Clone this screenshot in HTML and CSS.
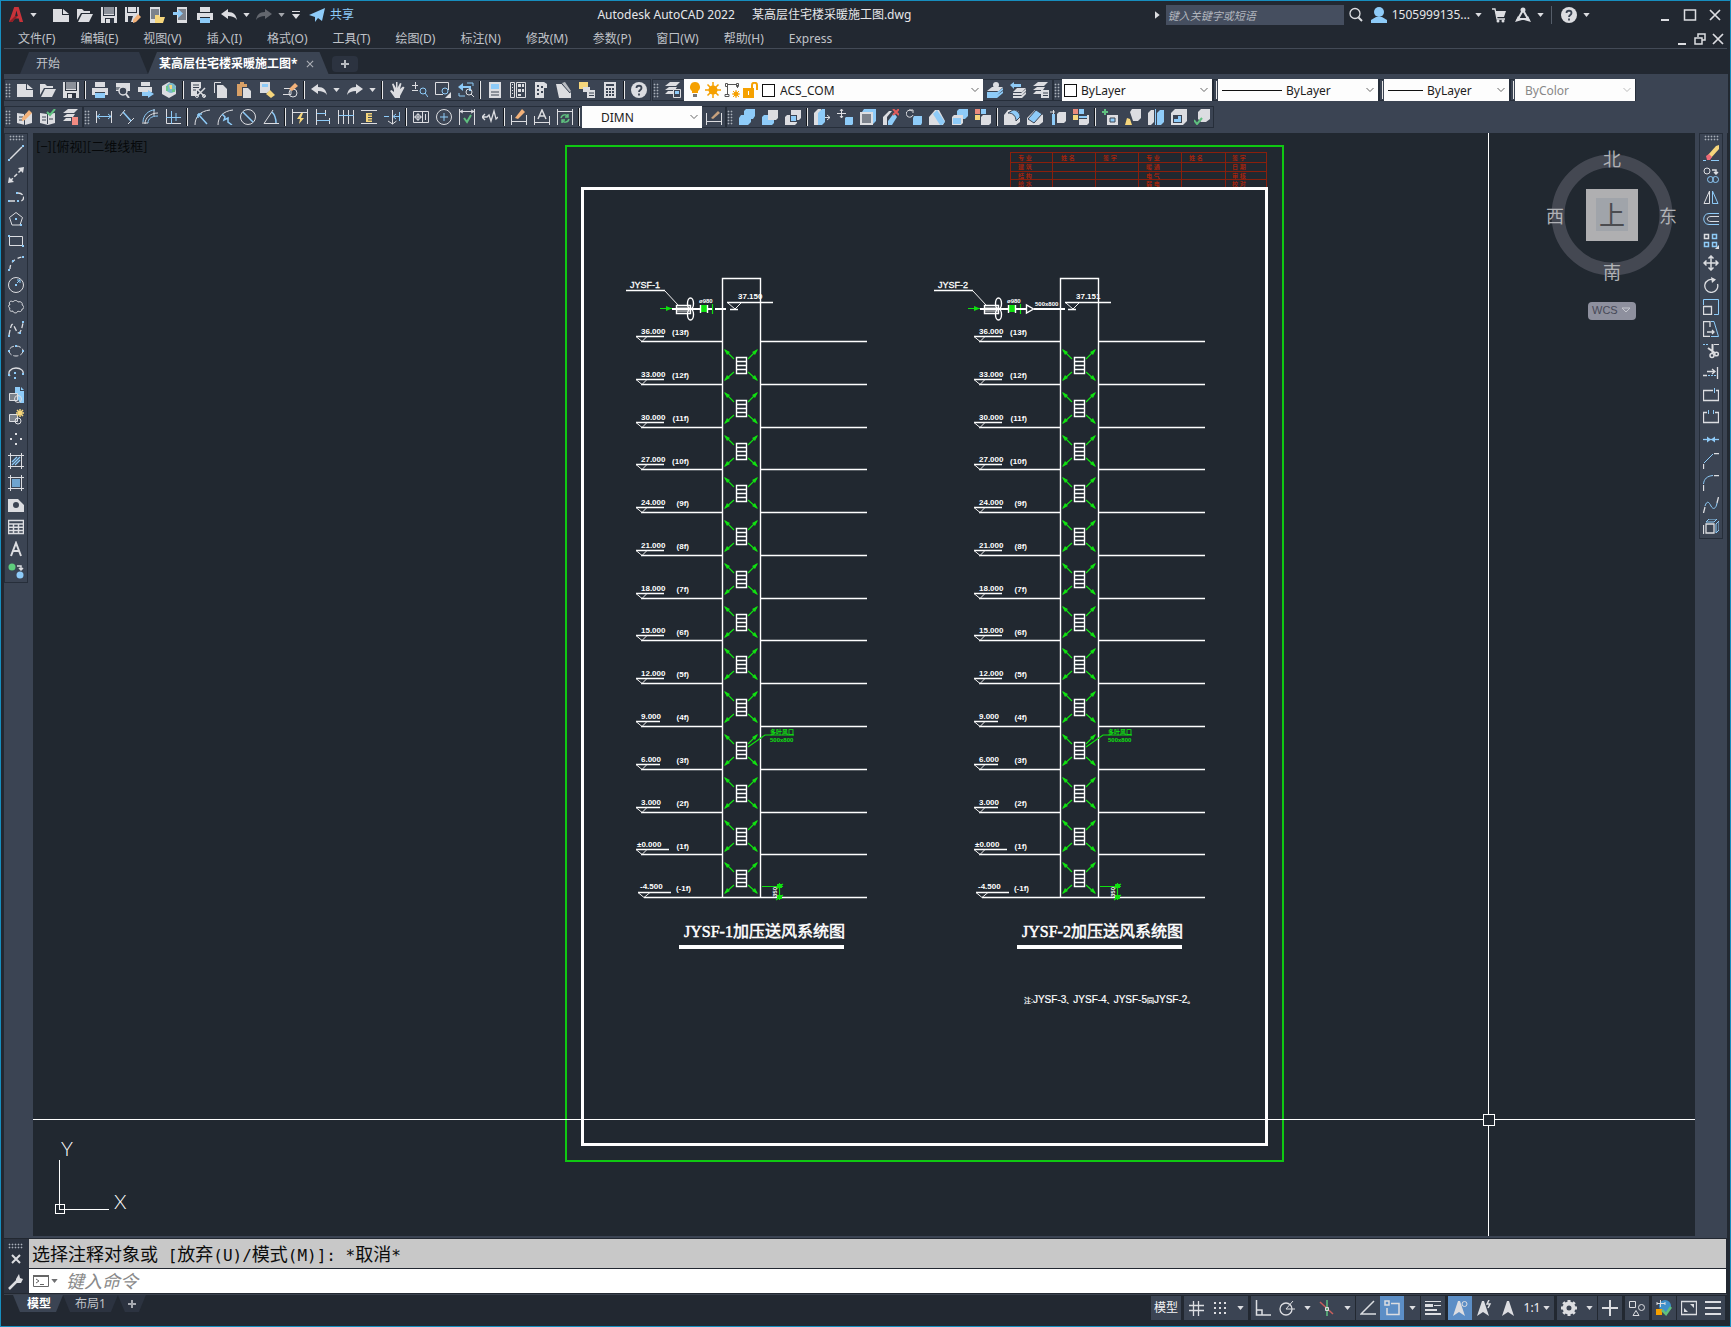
FILE: index.html
```html
<!DOCTYPE html>
<html lang="zh-CN">
<head>
<meta charset="utf-8">
<title>Autodesk AutoCAD 2022 某高层住宅楼采暖施工图.dwg</title>
<link rel="stylesheet" href="styles.css">
</head>
<body>
<svg class="sprite" aria-hidden="true">
<!-- shared parts -->
<symbol id="down" viewBox="0 0 8 5"><path class="w" d="M0 0h8L4 5z"/></symbol>
<symbol id="chev" viewBox="0 0 8 6"><path d="M.5 1L4 4.500 7.500 1" fill="none" stroke="currentColor"/></symbol>
<!-- files -->
<symbol id="logo" viewBox="0 0 16 18"><path fill="#c8333a" fill-rule="evenodd" d="M0 17L6 0h5l5 17h-4l-1-4H6l-2 4zM7 10h3L8.500 4z"/><path fill="#8e1f26" d="M0 17l7-7h3L4 17z"/></symbol>
<symbol id="new" viewBox="0 0 16 16"><path class="w" d="M0 2h9v6h7v7H0zM10 2l6 5h-6z"/></symbol>
<symbol id="open" viewBox="0 0 16 16"><path class="w" d="M0 13V2h5l2 2h6v2H4zM5 7h11l-4 8H1z"/></symbol>
<symbol id="save" viewBox="0 0 16 16"><path class="w" d="M0 0h16v16H0z"/><path fill="#8b9099" d="M3 0h10v7H3z"/><path fill="#2b323e" d="M2 0h1v8h10V0h1v9H2zM4 11h9v5H4z"/><path class="w" d="M5 12h4v4H5z"/></symbol>
<symbol id="saveas" viewBox="0 0 16 16"><path class="w" d="M0 0h14v8l-6 7H0z"/><path fill="#2b323e" d="M2 0h1v5h8V0h1v6H2zM3 9h5l-2 6H3z"/><path fill="#f3b27a" d="M8 13l5-6 3 3-5 5-3 1z"/></symbol>
<symbol id="mopen" viewBox="0 0 16 16"><path class="w" d="M1 0h10v16H1z"/><path fill="#7c828c" d="M2 2h8v10H2z"/><path class="y" d="M6 8h4l1 2h5l-2 6H6z"/></symbol>
<symbol id="msave" viewBox="0 0 16 16"><path class="w" d="M4 0h10v16H4z"/><path fill="#7c828c" d="M5 2h8v11H5z"/><path class="b" d="M0 5h5V2l5 4.500L5 11V8H0z"/></symbol>
<symbol id="print" viewBox="0 0 16 16"><path class="w" d="M3 0h10v5H3zM0 6h16v7h-3v-3H3v3H0z"/><path class="b" d="M3 11h10v5H3z"/></symbol>
<symbol id="undo" viewBox="0 0 16 16"><path class="w" d="M0 7l7-5v3c6 0 8 3 9 8-2-3-5-4-9-4v3z"/></symbol>
<symbol id="redo" viewBox="0 0 16 16"><path class="w" d="M16 7L9 2v3C3 5 1 8 0 13c2-3 5-4 9-4v3z"/></symbol>
<symbol id="custom" viewBox="0 0 10 10"><path class="w" d="M1 1h8v1H1zM1 4h8L5 9z"/></symbol>
<symbol id="plane" viewBox="0 0 16 16"><path class="b" d="M0 8L16 1 6 10zM6 10l10-9-3 13-4-3-3 4z"/></symbol>
<symbol id="preview" viewBox="0 0 16 16"><path class="w" d="M1 1h14v8H1z"/><path fill="#7c828c" d="M1 5h4v3H1z"/><circle class="sw" cx="8" cy="9" r="4" stroke-width="1.500" fill="#3b4453"/><path class="sw" stroke-width="2" d="M11 12l3 4"/></symbol>
<symbol id="publish" viewBox="0 0 16 16"><path class="w" d="M3 0h9v4H3zM0 5h14v5H0z"/><path class="b" d="M4 10h6V8l6 4-6 4v-2H4z"/></symbol>
<symbol id="globe" viewBox="0 0 16 16"><path class="w" d="M1 4l7-4 7 4v8l-7 4-7-4z"/><circle cx="10" cy="6" r="5" fill="#79b8c9"/><path class="y" d="M8 3h3v4H9z"/><path fill="#6cc98c" d="M11 7h3v3h-3zM5 4h2v5H5z"/></symbol>
<symbol id="cut" viewBox="0 0 16 16"><path class="w" d="M1 0h10v6l-4 3v5H1z"/><path stroke="#3b4453" d="M3 3h6M3 5.500h6M3 8h3"/><path class="sw" stroke-width="1.500" d="M7 14l8-8M7 7l8 8"/><circle class="sw" cx="7" cy="14" r="1.500"/><circle class="sw" cx="14" cy="14" r="1.500"/></symbol>
<symbol id="copy" viewBox="0 0 16 16"><path class="sw" d="M1.500 11V.5H8"/><path class="w" d="M4 3h6l4 4v9H4z"/></symbol>
<symbol id="paste" viewBox="0 0 16 16"><path fill="#d9a066" d="M1 2h3V0h4v2h3v3H6v9H1z"/><path class="w" d="M7 6h5l3 3v7H7z"/></symbol>
<symbol id="match" viewBox="0 0 16 16"><path class="w" d="M1 0h10v9l-3 2H1z"/><path class="b" d="M3 2h6v3H3z"/><path class="y" d="M7 12l4-4 5 5-4 3z"/></symbol>
<symbol id="block" viewBox="0 0 16 16"><path class="sw" d="M2 6.500h7v6H1"/><circle class="sw" cx="11" cy="11" r="4"/><path fill="#f3b27a" d="M7 7l6-6 3 3-6 5z"/></symbol>
<symbol id="pan" viewBox="0 0 16 16"><path class="w" d="M5 8L3 2l1.500-.5L7 6V0h1.500v6L11 1l1.500.500L11 7l3-2.500 1.500 1L11 14v2H6L1 9l1.500-1L5 10z"/></symbol>
<symbol id="zrt" viewBox="0 0 16 16"><path class="sw" d="M0 3.500h6M3.500 0v7M0 8.500h6"/><circle class="sb" cx="11" cy="9" r="3"/><path class="sb" d="M13 11l3 4"/></symbol>
<symbol id="zwin" viewBox="0 0 16 16"><path class="sw" d="M8 12.500H.5V.5h13V8"/><circle class="sb" cx="10" cy="9" r="3"/><path class="w" d="M16 10v6h-6z"/></symbol>
<symbol id="zprev" viewBox="0 0 16 16"><path class="sb" stroke-width="2" d="M3 5h9v4"/><path class="b" d="M0 5l5-4v8z"/><path class="sb" d="M1 11v3h6M9 1h6v3"/><circle class="sw" cx="11" cy="10" r="3"/><path class="sw" d="M13 12l3 3"/></symbol>
<symbol id="prop" viewBox="0 0 16 16"><path class="w" d="M2 0h12v16H2z"/><path class="b" d="M4 2h8v5H4z"/><path stroke="#3b4453" d="M4 10h8M4 13h8"/></symbol>
<symbol id="dc" viewBox="0 0 16 16"><path class="sw" d="M.5.500h4v15h-4zM6.500.500h9v15h-9z"/><path stroke="#dcdde1" stroke-dasharray="1 2" d="M2.500 2v12"/><path class="w" d="M8 2h3v3H8zM12 2h2v3h-2zM8 7h3v3H8zM12 7h2v3h-2zM8 12h3v2H8z"/></symbol>
<symbol id="tool" viewBox="0 0 16 16"><path class="w" d="M2 0h9l3 2v4h-3v10H2z"/><path fill="#3b4453" d="M4 3h2v2H4zM4 7h2v2H4zM4 11h2v2H4zM8 4h2v2H8zM8 9h2v2H8z"/></symbol>
<symbol id="sheet" viewBox="0 0 16 16"><path class="w" d="M0 2h6l9 9v5H3z"/><path fill="#b9bcc2" d="M6 1l3-1 6 9-2 2z"/><path fill="none" stroke="#3b4453" d="M6 2l8 9"/></symbol>
<symbol id="markup" viewBox="0 0 16 16"><path class="y" d="M0 0h9v7H0z"/><path class="w" d="M4 5h7v5H4zM8 8h8v8H8z"/><path stroke="#3b4453" d="M10 11h5M10 13.500h5"/></symbol>
<symbol id="calc" viewBox="0 0 16 16"><path class="w" d="M2 0h12v16H2z"/><path fill="#3b4453" d="M4 2h8v2H4zM4 6h2v2H4zM7 6h2v2H7zM10 6h2v2h-2zM4 9h2v2H4zM7 9h2v2H7zM10 9h2v2h-2zM4 12h2v2H4zM7 12h2v2H7zM10 12h2v2h-2z"/></symbol>
<symbol id="help" viewBox="0 0 16 16"><circle class="w" cx="8" cy="8" r="8"/><path d="M5.500 6c0-3 5-3 5 0 0 2-2.500 2-2.500 4M8 11.500v2" fill="none" stroke="#3b4453" stroke-width="1.800"/></symbol>
<!-- layers -->
<symbol id="laymgr" viewBox="0 0 16 16"><path class="w" d="M5 0h10l-4 4H0zM4 5h8l-2 3H0zM3 9h5v3H0z"/><path class="sw" fill="#3b4453" d="M8.500 7.500h7v8h-7z"/><path class="b" d="M10 9h4v3h-4z"/></symbol>
<symbol id="laycur" viewBox="0 0 16 16"><circle class="w" cx="9" cy="3" r="3"/><path class="w" d="M5 5h11l-4 4H0z"/><path class="b" d="M0 10h10l6-4v2l-6 5H0zM0 13h10l6-4v2l-6 5H0z"/></symbol>
<symbol id="layprev" viewBox="0 0 16 16"><path class="b" d="M0 3l4-3v2h7v3H4v2z"/><path class="w" d="M7 6h9l-4 4H3zM3 11h8l5-4v2l-4 4H3zM3 14h8l5-4v2l-4 4H3z"/></symbol>
<symbol id="laystate" viewBox="0 0 16 16"><path class="w" d="M5 0h10l-4 4H0zM4 5h8l-2 3H0zM3 9h5v3H0zM8 8h8v8H8z"/><path stroke="#3b4453" d="M10 11h5M10 13.500h5"/></symbol>
<symbol id="bulb" viewBox="0 0 16 16"><path class="o" d="M8 0a5 5 0 0 1 3 9v2H5V9a5 5 0 0 1 3-9z"/><path fill="#777" d="M6 12h4v3H6z"/></symbol>
<symbol id="sun" viewBox="0 0 16 16"><circle class="o" cx="8" cy="8" r="4.500"/><path stroke="#f5a000" stroke-width="1.500" d="M8 0v16M0 8h16M2.500 2.500l11 11M13.500 2.500l-11 11"/></symbol>
<symbol id="vpsun" viewBox="0 0 16 16"><path fill="none" stroke="#555" d="M4 2.500h8M3.500 4v8M13.500 3v3M1.500 1.500h2v3h-2zM12.500 1.500h2v3h-2zM1 12.500h4v2H1z"/><circle class="o" cx="12" cy="12" r="2.500"/><path stroke="#f5a000" d="M12 8v8M8 12h8M9 9l6 6M15 9l-6 6"/></symbol>
<symbol id="lock" viewBox="0 0 16 16"><path class="o" d="M0 6h11v10H0z"/><path fill="none" stroke="#f5a000" stroke-width="2" d="M9 7V3c0-3 5-3 5 0v5"/><path stroke="#fff" d="M5.500 9v4"/></symbol>
<!-- reference editing and dimensions -->
<symbol id="bookp" viewBox="0 0 16 16"><path class="w" d="M0 4l7 1 8-1v10l-7 2-8-2z"/><path stroke="#3b4453" d="M7.500 5v11M2 8h4M2 11h4"/><path fill="#f3b27a" d="M5 9l7-8 3 3-7 7-3 1z"/></symbol>
<symbol id="bookc" viewBox="0 0 16 16"><path class="w" d="M0 4l7 1 8-1v10l-7 2-8-2z"/><path stroke="#3b4453" d="M7.500 5v10M2 8h4M2 11h4M9 10h4"/><path class="sg" stroke-width="2" d="M7 3l3 3 5-6"/></symbol>
<symbol id="layred" viewBox="0 0 16 16"><path class="w" d="M5 0h10l-4 4H0zM4 5h8l-2 3H0zM3 9h5v3H0z"/><path fill="#f28b82" d="M9 8h6v8H9z"/></symbol>
<symbol id="dlin" viewBox="0 0 16 16"><path class="sw" d="M.5 2v12M15.500 2v12"/><path class="sb" d="M1 7.500h14M4 5L1 7.500 4 10M12 5l3 2.500-3 2.500"/></symbol>
<symbol id="dali" viewBox="0 0 16 16"><path class="sw" d="M1 7l5-6M9 15l6-6"/><path class="sb" stroke-width="1.500" d="M4 3l8 9"/></symbol>
<symbol id="darc" viewBox="0 0 16 16"><path class="sw" d="M3 15C3 9 8 4 16 4M0 14h6M12 0v7"/><path class="sb" d="M1 13C1 7 6 1 13 1M6 14c0-4 3-7 10-7"/></symbol>
<symbol id="dord" viewBox="0 0 16 16"><path class="sw" d="M1.500 0v14.500H16"/><path class="sb" d="M6.500 2v13M1 8.500h15M11 4v8"/></symbol>
<symbol id="drad" viewBox="0 0 16 16"><path class="sw" d="M1 16C1 8 6 2 16 1"/><path class="sb" stroke-width="1.500" d="M4 5l9 10M4 5v4M4 5h4"/></symbol>
<symbol id="djog" viewBox="0 0 16 16"><path class="sw" d="M1 16C1 8 6 2 16 1"/><path class="sb" stroke-width="1.500" d="M5 5l3 3-1 3 4-2v4l4 3"/></symbol>
<symbol id="ddia" viewBox="0 0 16 16"><circle class="sw" cx="8" cy="8" r="7.500"/><path class="sb" stroke-width="1.500" d="M3 3l10 10"/></symbol>
<symbol id="dang" viewBox="0 0 16 16"><path class="sw" d="M10 1L1 14.500h15"/><path class="sb" stroke-width="1.500" d="M9 3c3 3 4 6 4 11"/></symbol>
<symbol id="dqk" viewBox="0 0 16 16"><path class="sw" d="M.5 0v15M15.500 0v15M1 3.500h14"/><path class="y" d="M9 4L5 10h3l-1 5 5-6H9l2-5z"/></symbol>
<symbol id="dbas" viewBox="0 0 16 16"><path class="sw" d="M1.500 0v16M10.500 1v6M14.500 9v6"/><path class="sb" d="M2 4.500h9M2 11.500h13"/></symbol>
<symbol id="dcon" viewBox="0 0 16 16"><path class="sw" d="M.5 1v14M5.500 1v14M10.500 1v14M15.500 1v14"/><path class="sb" d="M1 6.500h15"/></symbol>
<symbol id="dspc" viewBox="0 0 16 16"><path class="sw" d="M0 1.500h16M0 14.500h16"/><path class="y" d="M5 4h6v9H5z"/><path stroke="#3b4453" d="M7 6h4M7 8.500h4M7 11h4"/></symbol>
<symbol id="dbrk" viewBox="0 0 16 16"><path class="sw" d="M8.500 1v14M4 12l4.500 3 4-3"/><path class="sb" d="M0 7.500h5M15.500 3v9M10 7.500h5M12 5l-3 2.500 3 2.500"/></symbol>
<symbol id="dtol" viewBox="0 0 16 16"><path class="sw" d="M.5 2.500h15v11H.5zM9.500 3v10"/><circle class="sw" cx="5" cy="8" r="2.500"/><path class="sw" d="M5 4v8M1 8h8M12.500 5v6"/></symbol>
<symbol id="dcen" viewBox="0 0 16 16"><circle class="sw" cx="8" cy="8" r="7.500"/><path class="sb" d="M8 4v8M4 8h8"/></symbol>
<symbol id="dins" viewBox="0 0 16 16"><path class="sw" d="M.5 0v16M15.500 0v16M1 2.500h14M4 1L1 2.500 4 4M12 1l3 1.500L12 4"/><path class="sg" stroke-width="2" d="M5 9l3 4 4-7"/></symbol>
<symbol id="djl" viewBox="0 0 16 16"><path class="sw" stroke-width="1.300" d="M0 8h5l2-2 2 6 3-10 2 8 2-2M3 5L0 8l3 3"/></symbol>
<symbol id="ded" viewBox="0 0 16 16"><path class="sw" d="M.5 6v10M15.500 6v10M1 12.500h14"/><path fill="#f3b27a" d="M4 9l7-9 3 3-7 7z"/></symbol>
<symbol id="dte" viewBox="0 0 16 16"><path class="sw" d="M.5 7v9M15.500 7v9M1 13.500h14"/><path class="sw" stroke-width="1.500" d="M4 10L8 1l4 9M5.500 7h5"/></symbol>
<symbol id="dup" viewBox="0 0 16 16"><path class="sw" d="M.5 0v16M15.500 0v16M1 2.500h14"/><path class="sg" stroke-width="1.500" d="M4 9c1-4 6-4 7-1M12 10c-1 4-6 4-7 1M11 5v3H8M5 14v-3h3"/></symbol>
<symbol id="dsty" viewBox="0 0 16 16"><path class="sw" d="M.5 4v12M15.500 4v12M1 12.500h14"/><path fill="#c7a17d" d="M5 9l7-7 2 2-7 6z"/></symbol>
<!-- solids -->
<symbol id="uni" viewBox="0 0 16 16"><path class="b" d="M5 2l2-2h9v7l-2 3h-2v3l-3 3H0V9l2-3h3z"/></symbol>
<symbol id="sub" viewBox="0 0 16 16"><path class="w" d="M6 1h10v8l-2 2H6z"/><path class="b" d="M0 8l2-2h4v5h6v3l-2 2H0z"/></symbol>
<symbol id="int" viewBox="0 0 16 16"><path class="w" d="M6 1h10v8l-2 2h-2v3l-2 2H0V8l2-2h4z"/><path fill="#3b4453" d="M5 6h7v7H5z"/><path class="b" d="M6 7h5v5H6z"/></symbol>
<symbol id="fext" viewBox="0 0 16 16"><path class="w" d="M0 4l4-4h3v3l-3 3v10H0z"/><path class="b" d="M4 4l4-4h3v13l-3 3H4z"/><path class="sw" d="M11 8.500h5M13 6l3 2.500-3 2.500"/></symbol>
<symbol id="fmov" viewBox="0 0 16 16"><path class="sw" d="M4.500 0v9M0 4.500h9M3 2l1.500-2L6 2M3 7l1.500 2L6 7"/><path class="b" d="M8 9l1-1h7v7l-1 1H8z"/></symbol>
<symbol id="foff" viewBox="0 0 16 16"><path class="b" d="M4 0h12v12l-3 3V3H2z"/><path fill="#7c828c" stroke="#dcdde1" stroke-width="2" d="M1 4h11v11H1z"/></symbol>
<symbol id="fdel" viewBox="0 0 16 16"><path class="w" d="M0 16V8l6-6h3L4 8v8z"/><path class="b" d="M5 12l6-8 3 4-5 8H5z"/><path fill="none" stroke="#e25b5b" stroke-width="2" d="M10 0l6 6M16 0l-6 6"/></symbol>
<symbol id="frot" viewBox="0 0 16 16"><path class="sw" d="M6 2a3.500 3.500 0 1 0 1 4M3 1h4v3"/><path class="b" d="M7 9l1-2h8v7l-1 2H7z"/></symbol>
<symbol id="ftap" viewBox="0 0 16 16"><path class="w" d="M0 16V8l6-7h4l6 11-2 4z"/><path class="b" d="M4 5l4-4 8 12-3 3h-2z"/></symbol>
<symbol id="fcop" viewBox="0 0 16 16"><path class="b" d="M5 2l2-2h9v7l-3 3H5z"/><path class="w" d="M0 8l2-2h9v8l-2 2H0z"/><path class="b" d="M1 9h8v6H1z"/></symbol>
<symbol id="fcol" viewBox="0 0 16 16"><path fill="#e98a7c" d="M0 0h5v5H0z"/><path class="b" d="M6 0h5v5H6z"/><path class="y" d="M0 6h5v5H0z"/><path class="w" d="M6 8l2-2h8v8l-2 2H6z"/></symbol>
<symbol id="ecop" viewBox="0 0 16 16"><path class="w" d="M0 16V6l4-5h6c4 0 6 3 6 7v5l-4 3z"/><path class="b" stroke="#3b4453" d="M4 4l5-3c4 0 7 3 7 7l-4 4c0-5-3-8-8-8z"/></symbol>
<symbol id="ecol" viewBox="0 0 16 16"><path class="w" d="M0 16V9l8-8 8 5v7l-4 3z"/><path class="b" stroke="#3b4453" d="M1 10l8-9 6 4-8 9z"/></symbol>
<symbol id="eimp" viewBox="0 0 16 16"><path class="sw" d="M0 3h5M3.500 1v14"/><path class="b" d="M2 5h3v11H2z"/><path class="w" d="M7 5l2-2h7v9l-2 2H7z"/></symbol>
<symbol id="ecl" viewBox="0 0 16 16"><path fill="#e98a7c" d="M0 0h5v5H0z"/><path class="b" d="M6 0h5v5H6zM6 7h8v2H6z"/><path class="y" d="M0 6h5v5H0z"/><path class="w" d="M6 10h8V6h2v8l-2 2H6z"/></symbol>
<symbol id="imp" viewBox="0 0 16 16"><path class="sg" stroke-width="2" d="M3 0v6M0 3h6"/><path class="w" d="M5 6h11v10H5z"/><path class="b" stroke="#3b4453" d="M8 9h5v4H8z"/></symbol>
<symbol id="cln" viewBox="0 0 16 16"><path class="w" d="M5 3l2-3h9v9l-3 3H8z"/><path class="y" d="M2 9l3 1 2 6H0z"/></symbol>
<symbol id="sep3" viewBox="0 0 16 16"><path class="w" d="M0 4l3-3h3v12l-3 3H0z"/><path class="b" d="M9 4l3-3h4v12l-3 3H9z"/><path class="sb" d="M7.500 0v16"/></symbol>
<symbol id="shl" viewBox="0 0 16 16"><path class="w" d="M0 4l4-4h12v12l-4 4H0z"/><path fill="#3b4453" d="M2 6h9v8H2z"/><path class="b" d="M3 10h4v-3h3v6H3z"/></symbol>
<symbol id="chk" viewBox="0 0 16 16"><path class="w" d="M4 3l3-3h9v10l-4 3H7l-3-3z"/><path class="sg" stroke-width="2" d="M0 11l3 4 5-6"/></symbol>
<!-- draw -->
<symbol id="line" viewBox="0 0 16 16"><path class="sw" stroke-width="1.500" d="M2 14L14 2"/><path class="b" d="M0 14h2v2H0zM14 0h2v2h-2z"/></symbol>
<symbol id="xline" viewBox="0 0 16 16"><path class="sw" stroke-dasharray="4 2" stroke-width="1.500" d="M2 14L14 2"/><path class="w" d="M0 16l1-6 5 5zM16 0l-6 1 5 5z"/></symbol>
<symbol id="pline" viewBox="0 0 16 16"><path class="sw" stroke-width="1.300" stroke-dasharray="5 2" d="M2 12h8M10 4c7 0 7 8 2 8"/><path class="b" d="M0 11h2v2H0zM9 11h2v2H9zM8 3h2v2H8z"/></symbol>
<symbol id="poly" viewBox="0 0 16 16"><path class="sw" d="M8 1.500l6.500 5-2.500 7.500H4L1.500 6.500z"/><path class="b" d="M7 7h2v2H7zM12 13h2v2h-2z"/></symbol>
<symbol id="rect" viewBox="0 0 16 16"><path class="sw" d="M1.500 3.500h13v9h-13z"/><path class="b" d="M0 2h2v2H0zM14 12h2v2h-2z"/></symbol>
<symbol id="arc" viewBox="0 0 16 16"><path class="sw" stroke-width="1.300" stroke-dasharray="4 3" d="M2 14C2 8 6 3 15 2"/><path class="b" d="M0 14h2v2H0zM4 5h2v2H4zM14 1h2v2h-2z"/></symbol>
<symbol id="circ" viewBox="0 0 16 16"><circle class="sw" cx="8" cy="8" r="7.500"/><path class="b" d="M7 7h2v2H7z"/><path class="sb" d="M9 6l3-3M9 3h3v3"/></symbol>
<symbol id="cloud" viewBox="0 0 16 16"><path class="sw" d="M2 6C0 3 3 1 5 3c1-2 4-2 5 0 3-1 5 1 4 3 3 1 2 4 0 4 0 3-3 3-4 2-1 3-5 2-5 0-3 1-4-1-3-3C-.5 8 0 6 2 6z"/></symbol>
<symbol id="spl" viewBox="0 0 16 16"><path class="sw" stroke-width="1.300" stroke-dasharray="5 2" d="M1 14C3 4 4 1 6 5s4 9 6 6 2-5 3-9"/><path class="b" d="M0 14h2v2H0zM11 11h2v2h-2zM14 0h2v2h-2z"/></symbol>
<symbol id="ell" viewBox="0 0 16 16"><ellipse class="sw" cx="8" cy="8" rx="7" ry="5" stroke-dasharray="5 2"/><path class="b" d="M7 2h2v2H7zM0 7h2v2H0zM14 7h2v2h-2z"/></symbol>
<symbol id="ella" viewBox="0 0 16 16"><path class="sw" stroke-width="1.300" d="M2 11C-1 7 3 3 8 3s8 3 7 6"/><path class="b" d="M6 7h2v2H6zM6 12h2v2H6zM0 9h2v2H0zM14 8h2v2h-2z"/></symbol>
<symbol id="insb" viewBox="0 0 16 16"><path class="b" d="M7 0h5v4h4v12h-4L7 7zM13 0l3 3h-3z"/><path class="sw" fill="#7c828c" d="M1.500 6.500h8v7h-8z"/><circle class="sw" cx="10" cy="12" r="3.500"/></symbol>
<symbol id="mkb" viewBox="0 0 16 16"><path class="sw" fill="#7c828c" d="M1.500 5.500h8v7h-8z"/><circle class="sw" cx="10" cy="12" r="3"/><path fill="none" class="sy" stroke-width="1.500" d="M12 0v8M8 4h8M9 1l6 6M15 1L9 7"/></symbol>
<symbol id="pts" viewBox="0 0 16 16"><path class="w" d="M7 2h2v2H7zM2 7h2v2H2zM12 7h2v2h-2zM7 12h2v2H7z"/></symbol>
<symbol id="hat" viewBox="0 0 16 16"><path class="sb" stroke-width="1.300" d="M4 9l5-5M4 12l8-8M7 12l5-5"/><path class="sw" d="M0 2.500h16M0 13.500h16M2.500 0v16M13.500 0v16"/></symbol>
<symbol id="grad" viewBox="0 0 16 16"><path fill="#6fa4cf" d="M4 4h8v8H4z"/><path class="sw" d="M0 2.500h16M0 13.500h16M2.500 0v16M13.500 0v16"/></symbol>
<symbol id="reg" viewBox="0 0 16 16"><path class="w" fill-rule="evenodd" d="M0 2h10l6 6v7H0zM8 5a3 3 0 1 0 0 6 3 3 0 0 0 0-6z"/></symbol>
<symbol id="tbl" viewBox="0 0 16 16"><path class="sw" stroke-width="1.500" d="M.5 1.500h15v13H.5zM0 5h16M0 8.300h16M0 11.500h16M5.500 5v10M10.500 5v10"/></symbol>
<symbol id="mtx" viewBox="0 0 16 16"><path class="sw" stroke-width="2" d="M3 15L8 2l5 13M5 10h6"/></symbol>
<symbol id="addsel" viewBox="0 0 16 16"><circle cx="4" cy="4" r="3.500" fill="#5fce7d"/><circle class="b" cx="12" cy="12" r="3.500"/><path class="sw" stroke-width="1.500" d="M9 3h4v4M11 5l2 2 2-2"/></symbol>
<!-- modify -->
<symbol id="era" viewBox="0 0 16 16"><path class="sb" d="M0 15.500h3M8 15.500h8"/><path class="y" d="M5 10L13 1l3-1v4l-8 9z"/><path fill="#ef6a78" d="M3 11l3-2 3 3-2 3H4z"/></symbol>
<symbol id="mcop" viewBox="0 0 16 16"><circle class="sw" cx="4" cy="4" r="3"/><path class="sw" stroke-width="1.500" d="M9 3h4v4M11 5l2 2 2-2"/><circle class="sb" cx="7.500" cy="12.500" r="3"/><circle class="sb" cx="12.500" cy="12.500" r="3"/></symbol>
<symbol id="mir" viewBox="0 0 16 16"><path class="sw" d="M6.500 2v12.500H1z"/><path class="sb" d="M9.500 2v12.500H15z"/></symbol>
<symbol id="off" viewBox="0 0 16 16"><path class="sb" d="M16 2.500H6c-7 0-7 11 0 11h10"/><path class="sw" d="M16 5.500H8c-5 0-5 5 0 5h8"/></symbol>
<symbol id="arr" viewBox="0 0 16 16"><path class="sw" stroke-width="1.500" d="M1.500 1.500h4v4h-4z"/><path class="sb" stroke-width="1.500" d="M9.500 1.500h4v4h-4zM1.500 9.500h4v4h-4zM9.500 9.500h4v4h-4z"/><path class="w" d="M16 12v4h-4z"/></symbol>
<symbol id="mov" viewBox="0 0 16 16"><path class="sw" stroke-width="1.500" d="M8 1v14M1 8h14M5.500 3.500L8 1l2.500 2.500M5.500 12.500L8 15l2.500-2.500M3.500 5.500L1 8l2.500 2.500M12.500 5.500L15 8l-2.500 2.500"/></symbol>
<symbol id="rot" viewBox="0 0 16 16"><path class="sw" stroke-width="1.300" d="M11 3a6.500 6.500 0 1 0 3.500 4"/><path class="w" d="M8 0l5 2.500L9 6z"/></symbol>
<symbol id="scl" viewBox="0 0 16 16"><path class="sb" d="M.5 6V.5h15v15H11"/><path class="sw" stroke-width="1.300" d="M.5 7.500h8v8h-8z"/></symbol>
<symbol id="str" viewBox="0 0 16 16"><path class="sw" stroke-width="1.300" d="M7 6V.5H.5v15H7M4 11h7M9 9l2 2-2 2"/><path class="sb" d="M8 .5h3l4.500 15H8"/></symbol>
<symbol id="trm" viewBox="0 0 16 16"><path class="sb" stroke-dasharray="2 1" d="M0 1.500h6"/><path class="sw" d="M11 1.500h5"/><path class="sw" stroke-width="2" d="M9.500 1v9M5 5l7 5"/><circle class="sw" cx="9" cy="12.500" r="2" stroke-width="1.500"/><circle class="sw" cx="13.500" cy="11" r="1.800" stroke-width="1.500"/></symbol>
<symbol id="ext" viewBox="0 0 16 16"><path class="sw" stroke-width="1.300" d="M14.500 2v12M4 6.500h8M9 4l3 2.500L9 9M0 10.500h4"/><path class="sb" stroke-dasharray="2 1" d="M5 10.500h9"/></symbol>
<symbol id="brp" viewBox="0 0 16 16"><path class="sw" stroke-width="1.300" d="M10 3.500H.5v10h15v-10H13"/><path class="sb" d="M11.500 1v5"/></symbol>
<symbol id="brk" viewBox="0 0 16 16"><path class="sw" stroke-width="1.300" d="M4 3.500H.5v10h15v-10H12"/><path class="sb" d="M5.500 1v4M10.500 1v4"/></symbol>
<symbol id="joi" viewBox="0 0 16 16"><path class="sb" stroke-width="1.300" d="M0 8.500h16"/><path class="b" d="M4 5.500l4 3-4 3zM12 5.500l-4 3 4 3z"/></symbol>
<symbol id="cha" viewBox="0 0 16 16"><path class="sw" stroke-width="1.300" d="M.5 16v-5M11 .5h5"/><path class="sb" d="M1 10l9-9"/></symbol>
<symbol id="fil" viewBox="0 0 16 16"><path class="sw" stroke-width="1.300" d="M.5 16v-6M11 .5h5"/><path class="sb" d="M.5 9C1 4 4 1 10 .5"/></symbol>
<symbol id="ble" viewBox="0 0 16 16"><path class="sw" stroke-width="1.300" d="M.5 16L2 10M15.500 0L14 6"/><path class="sb" d="M2 9c2-6 4-4 6 0s5 3 6-3"/></symbol>
<symbol id="expl" viewBox="0 0 16 16"><path class="sw" stroke-width="1.300" d="M3 5h8v9H3zM.5 6v9"/><path class="sb" d="M3 3l3-3h8l-3 3zM13 5l3-3v9l-3 3z"/></symbol>
<!-- window and service controls -->
<symbol id="mag" viewBox="0 0 16 16"><circle class="sw" cx="7" cy="6.500" r="5" stroke-width="1.300"/><path class="sw" stroke-width="2" d="M10.500 10.500L14 14"/></symbol>
<symbol id="user" viewBox="0 0 16 16"><circle class="b" cx="8" cy="5" r="5"/><path class="b" d="M0 16v-3l5-3h6l5 3v3z"/></symbol>
<symbol id="cart" viewBox="0 0 16 16"><path class="w" d="M4 4h11l-2 6H6z"/><path class="sw" stroke-width="1.300" d="M1 2h3l2 10h8"/><circle class="w" cx="7" cy="14" r="1.500"/><circle class="w" cx="12" cy="14" r="1.500"/></symbol>
<symbol id="app" viewBox="0 0 16 16"><path class="sw" stroke-width="2" d="M8 3L3 12h10z"/><circle class="w" cx="8" cy="3" r="2.500"/><path class="w" d="M0 15l3-6 4 4zM16 15l-3-6-4 4z"/></symbol>
<symbol id="min" viewBox="0 0 16 16"><path class="w" d="M4 12h8v2H4z"/></symbol>
<symbol id="max" viewBox="0 0 16 16"><path class="sw" stroke-width="1.500" d="M2.500 3h11v10h-11z"/></symbol>
<symbol id="res" viewBox="0 0 16 16"><path class="sw" stroke-width="1.500" d="M3 7h7v6H3zM6 6V3h7v6h-3"/></symbol>
<symbol id="cls" viewBox="0 0 16 16"><path class="sw" stroke-width="1.700" d="M3 3l10 10M13 3L3 13"/></symbol>
<symbol id="clsb" viewBox="0 0 10 10"><path class="sw" stroke-width="2" d="M1 1l8 8M9 1L1 9"/></symbol>
<symbol id="plus" viewBox="0 0 10 10"><path class="sw" stroke-width="2" d="M5 1v8M1 5h8"/></symbol>
<symbol id="wrench" viewBox="0 0 16 16"><path class="sw" stroke-width="2.500" d="M1 15l8-8"/><path class="w" d="M8 5l3-5 1 4 3 1-2 4H8z"/></symbol>
<symbol id="cmd" viewBox="0 0 16 14"><path fill="none" stroke="#666" d="M.5 1.500h15v11H.5z"/><path fill="#666" d="M0 1h16v2H0z"/><path fill="none" stroke="#666" d="M3 5l3 2-3 2M7 10.500h4"/></symbol>
<!-- status bar -->
<symbol id="sgrid" viewBox="0 0 16 16"><path class="sw" stroke-width="1.300" d="M5.500 1v15M10.500 1v15M1 5.500h15M1 10.500h15"/></symbol>
<symbol id="sdots" viewBox="0 0 16 16"><path class="w" d="M2 2h2v2H2zM7 2h2v2H7zM12 2h2v2h-2zM2 7h2v2H2zM7 7h2v2H7zM12 7h2v2h-2zM2 12h2v2H2zM7 12h2v2H7zM12 12h2v2h-2z"/></symbol>
<symbol id="sorth" viewBox="0 0 16 16"><path class="sw" stroke-width="1.500" d="M1.500 0v15H16M2 10h5v5"/></symbol>
<symbol id="spol" viewBox="0 0 16 16"><circle class="sw" cx="7" cy="9" r="6" stroke-width="1.300"/><path class="sw" d="M7 9l7-8M7 9h9"/></symbol>
<symbol id="siso" viewBox="0 0 16 16"><path fill="none" stroke="#c9605c" stroke-width="1.500" d="M1 2l13 12"/><path class="sg" stroke-width="1.500" d="M8 0v16"/><path class="sw" d="M6.500 7.500h3v3h-3z"/></symbol>
<symbol id="strk" viewBox="0 0 16 16"><path class="sw" stroke-width="1.500" d="M14 1L1 14h15"/></symbol>
<symbol id="ssnap" viewBox="0 0 16 16"><path class="sw" stroke-width="1.500" d="M7 3.500h8v11H3V8M1 1h4v4H1z"/></symbol>
<symbol id="slw" viewBox="0 0 16 16"><path class="w" d="M0 1h16v1H0zM0 4h8v3H0zM9 5h7v1H9zM0 9h12v2H0zM0 13h16v2H0z"/></symbol>
<symbol id="san" viewBox="0 0 16 16"><path class="w" d="M7 1h2l5 15-6-4-6 4z"/></symbol>
<symbol id="sanv" viewBox="0 0 16 16"><path class="w" d="M6 1h2l5 15-6-4-6 4z"/><circle class="sw" cx="12.500" cy="4" r="2.500"/></symbol>
<symbol id="sana" viewBox="0 0 16 16"><path class="w" d="M6 1h2l5 15-6-4-6 4z"/><path class="sw" stroke-width="1.500" d="M13 0l-2 4h3l-2 4"/></symbol>
<symbol id="gear" viewBox="0 0 16 16"><circle cx="8" cy="8" r="4.500" fill="none" stroke="#dcdde1" stroke-width="4"/><path stroke="#dcdde1" stroke-width="3" d="M8 0v3M8 13v3M0 8h3M13 8h3M2.300 2.300l2 2M11.700 11.700l2 2M13.700 2.300l-2 2M4.300 11.700l-2 2"/></symbol>
<symbol id="splus" viewBox="0 0 16 16"><path class="sw" stroke-width="2" d="M8 0v16M0 8h16"/></symbol>
<symbol id="siso2" viewBox="0 0 16 16"><path class="sw" d="M.5 1.500h6v6h-6zM4 15.500l3-5 3 5z"/><circle class="sw" cx="12.500" cy="7.500" r="3"/></symbol>
<symbol id="sgfx" viewBox="0 0 16 16"><circle cx="9" cy="6" r="6" fill="#3f8fc9"/><path class="o" d="M0 9h6v6H0z"/><path class="sg" stroke-width="2.500" d="M6 10l4 4 5-7"/><path class="sw" d="M4.500 0v7M1 3.500h8M1 2v3M9 2v3"/></symbol>
<symbol id="sfull" viewBox="0 0 16 16"><path class="sw" stroke-width="1.300" d="M.5 1.500h15v13H.5z"/><path class="w" d="M13 4v4L9 4zM3 12V8l4 4z"/></symbol>
<symbol id="smenu" viewBox="0 0 16 16"><path class="w" d="M0 1h16v2H0zM0 7h16v2H0zM0 13h16v2H0z"/></symbol>
</svg>

<div class="window">
<header class="title">
  <button class="t24" aria-label="应用程序"><svg class="i"><use href="#logo"/></svg></button>
  <button class="dd" aria-label="应用程序菜单"><svg class="d"><use href="#down"/></svg></button>
  <div class="quick">
    <button class="t24" aria-label="新建"><svg class="i"><use href="#new"/></svg></button>
    <button class="t24" aria-label="打开"><svg class="i"><use href="#open"/></svg></button>
    <button class="t24" aria-label="保存"><svg class="i"><use href="#save"/></svg></button>
    <button class="t24" aria-label="另存为"><svg class="i"><use href="#saveas"/></svg></button>
    <button class="t24" aria-label="从移动设备打开"><svg class="i"><use href="#mopen"/></svg></button>
    <button class="t24" aria-label="保存到移动设备"><svg class="i"><use href="#msave"/></svg></button>
    <button class="t24" aria-label="打印"><svg class="i"><use href="#print"/></svg></button>
    <button class="t24" aria-label="放弃"><svg class="i"><use href="#undo"/></svg></button>
    <button class="dd" aria-label="放弃列表"><svg class="d"><use href="#down"/></svg></button>
    <button class="t24 dim" aria-label="重做"><svg class="i"><use href="#redo"/></svg></button>
    <button class="dd dim2" aria-label="重做列表"><svg class="d"><use href="#down"/></svg></button>
    <button class="dd wide" aria-label="自定义"><svg class="c"><use href="#custom"/></svg></button>
    <button class="share"><svg class="i"><use href="#plane"/></svg>共享</button>
  </div>
  <h1>Autodesk AutoCAD 2022 <span>某高层住宅楼采暖施工图.dwg</span></h1>
  <div class="service">
    <button class="play" aria-label="展开搜索"></button>
    <input class="search" type="text" aria-label="搜索" placeholder="键入关键字或短语">
    <button class="t24" aria-label="查找"><svg class="i"><use href="#mag"/></svg></button>
    <button class="account"><svg class="i"><use href="#user"/></svg>1505999135...<svg class="d"><use href="#down"/></svg></button>
    <button class="t24" aria-label="商店"><svg class="i"><use href="#cart"/></svg></button>
    <button class="t24" aria-label="应用"><svg class="i"><use href="#app"/></svg></button>
    <button class="dd" aria-label="应用列表"><svg class="d"><use href="#down"/></svg></button>
    <span class="bar"></span>
    <button class="t24" aria-label="帮助"><svg class="i"><use href="#help"/></svg></button>
    <button class="dd" aria-label="帮助列表"><svg class="d"><use href="#down"/></svg></button>
  </div>
  <div class="wctl">
    <button aria-label="最小化"><svg class="i"><use href="#min"/></svg></button>
    <button aria-label="最大化"><svg class="i"><use href="#max"/></svg></button>
    <button aria-label="关闭"><svg class="i"><use href="#cls"/></svg></button>
  </div>
</header>

<nav class="menu">
  <button>文件(F)</button><button>编辑(E)</button><button>视图(V)</button><button>插入(I)</button><button>格式(O)</button><button>工具(T)</button><button>绘图(D)</button><button>标注(N)</button><button>修改(M)</button><button>参数(P)</button><button>窗口(W)</button><button>帮助(H)</button><button>Express</button>
  <div class="wctl doc">
    <button aria-label="最小化图形"><svg class="i"><use href="#min"/></svg></button>
    <button aria-label="还原图形"><svg class="i"><use href="#res"/></svg></button>
    <button aria-label="关闭图形"><svg class="i"><use href="#cls"/></svg></button>
  </div>
</nav>

<div class="files">
  <button class="file start">开始</button>
  <div class="file active"><button>某高层住宅楼采暖施工图*</button><button class="x" aria-label="关闭"><svg class="c"><use href="#cls"/></svg></button></div>
  <button class="file add" aria-label="新图形"><svg class="c"><use href="#plus"/></svg></button>
</div>

<div class="bars">
  <div class="row">
    <div class="box"><span class="grip"></span>
      <button class="tb" aria-label="新建"><svg class="i"><use href="#new"/></svg></button>
      <button class="tb" aria-label="打开"><svg class="i"><use href="#open"/></svg></button>
      <button class="tb" aria-label="保存"><svg class="i"><use href="#save"/></svg></button>
      <span class="sep"></span>
      <button class="tb" aria-label="打印"><svg class="i"><use href="#print"/></svg></button>
      <button class="tb" aria-label="打印预览"><svg class="i"><use href="#preview"/></svg></button>
      <button class="tb" aria-label="发布"><svg class="i"><use href="#publish"/></svg></button>
      <button class="tb" aria-label="三维打印"><svg class="i"><use href="#globe"/></svg></button>
      <span class="sep"></span>
      <button class="tb" aria-label="剪切"><svg class="i"><use href="#cut"/></svg></button>
      <button class="tb" aria-label="复制"><svg class="i"><use href="#copy"/></svg></button>
      <button class="tb" aria-label="粘贴"><svg class="i"><use href="#paste"/></svg></button>
      <button class="tb" aria-label="特性匹配"><svg class="i"><use href="#match"/></svg></button>
      <button class="tb" aria-label="块编辑器"><svg class="i"><use href="#block"/></svg></button>
      <span class="sep"></span>
      <button class="tb" aria-label="放弃"><svg class="i"><use href="#undo"/></svg></button>
      <button class="ta" aria-label="放弃列表"><svg class="d"><use href="#down"/></svg></button>
      <button class="tb" aria-label="重做"><svg class="i"><use href="#redo"/></svg></button>
      <button class="ta" aria-label="重做列表"><svg class="d"><use href="#down"/></svg></button>
      <span class="sep"></span>
      <button class="tb" aria-label="平移"><svg class="i"><use href="#pan"/></svg></button>
      <button class="tb" aria-label="实时缩放"><svg class="i"><use href="#zrt"/></svg></button>
      <button class="tb" aria-label="窗口缩放"><svg class="i"><use href="#zwin"/></svg></button>
      <button class="tb" aria-label="缩放上一个"><svg class="i"><use href="#zprev"/></svg></button>
      <span class="sep"></span>
      <button class="tb" aria-label="特性"><svg class="i"><use href="#prop"/></svg></button>
      <button class="tb" aria-label="设计中心"><svg class="i"><use href="#dc"/></svg></button>
      <button class="tb" aria-label="工具选项板"><svg class="i"><use href="#tool"/></svg></button>
      <button class="tb" aria-label="图纸集"><svg class="i"><use href="#sheet"/></svg></button>
      <button class="tb" aria-label="标记集"><svg class="i"><use href="#markup"/></svg></button>
      <button class="tb" aria-label="计算器"><svg class="i"><use href="#calc"/></svg></button>
      <span class="sep"></span>
      <button class="tb" aria-label="帮助"><svg class="i"><use href="#help"/></svg></button>
    </div>
    <div class="box gap1"><span class="grip"></span>
      <button class="tb" aria-label="图层特性"><svg class="i"><use href="#laymgr"/></svg></button>
      <label class="combo layer"><svg class="i"><use href="#bulb"/></svg><svg class="i"><use href="#sun"/></svg><svg class="i near"><use href="#vpsun"/></svg><svg class="i near"><use href="#lock"/></svg><span class="swatch"></span><select aria-label="图层"><option>ACS_COM</option></select><svg class="v"><use href="#chev"/></svg></label>
      <button class="tb" aria-label="置为当前"><svg class="i"><use href="#laycur"/></svg></button>
      <button class="tb" aria-label="上一个图层"><svg class="i"><use href="#layprev"/></svg></button>
      <button class="tb" aria-label="图层状态"><svg class="i"><use href="#laystate"/></svg></button>
    </div>
    <div class="box"><span class="grip"></span>
      <label class="combo color"><span class="swatch"></span><select aria-label="颜色"><option>ByLayer</option></select><svg class="v"><use href="#chev"/></svg></label>
    </div>
    <div class="box"><span class="rule"></span>
      <label class="combo ltype"><span class="stroke"></span><select aria-label="线型"><option>ByLayer</option></select><svg class="v"><use href="#chev"/></svg></label>
    </div>
    <div class="box"><span class="rule"></span>
      <label class="combo lweight"><span class="stroke"></span><select aria-label="线宽"><option>ByLayer</option></select><svg class="v"><use href="#chev"/></svg></label>
    </div>
    <div class="box"><span class="rule"></span>
      <label class="combo pstyle"><select aria-label="打印样式" disabled><option>ByColor</option></select><svg class="v"><use href="#chev"/></svg></label>
    </div>
  </div>
  <div class="row">
    <div class="box"><span class="grip"></span>
      <button class="tb" aria-label="在位编辑参照"><svg class="i"><use href="#bookp"/></svg></button>
      <button class="tb" aria-label="保存参照"><svg class="i"><use href="#bookc"/></svg></button>
      <button class="tb" aria-label="图层隔离"><svg class="i"><use href="#layred"/></svg></button>
    </div>
    <div class="box"><span class="grip"></span>
      <button class="tb" aria-label="线性"><svg class="i"><use href="#dlin"/></svg></button>
      <button class="tb" aria-label="对齐"><svg class="i"><use href="#dali"/></svg></button>
      <button class="tb" aria-label="弧长"><svg class="i"><use href="#darc"/></svg></button>
      <button class="tb" aria-label="坐标"><svg class="i"><use href="#dord"/></svg></button>
      <span class="sep"></span>
      <button class="tb" aria-label="半径"><svg class="i"><use href="#drad"/></svg></button>
      <button class="tb" aria-label="折弯"><svg class="i"><use href="#djog"/></svg></button>
      <button class="tb" aria-label="直径"><svg class="i"><use href="#ddia"/></svg></button>
      <button class="tb" aria-label="角度"><svg class="i"><use href="#dang"/></svg></button>
      <span class="sep"></span>
      <button class="tb" aria-label="快速标注"><svg class="i"><use href="#dqk"/></svg></button>
      <button class="tb" aria-label="基线"><svg class="i"><use href="#dbas"/></svg></button>
      <button class="tb" aria-label="连续"><svg class="i"><use href="#dcon"/></svg></button>
      <button class="tb" aria-label="等距标注"><svg class="i"><use href="#dspc"/></svg></button>
      <button class="tb" aria-label="折断标注"><svg class="i"><use href="#dbrk"/></svg></button>
      <span class="sep"></span>
      <button class="tb" aria-label="公差"><svg class="i"><use href="#dtol"/></svg></button>
      <button class="tb" aria-label="圆心标记"><svg class="i"><use href="#dcen"/></svg></button>
      <button class="tb" aria-label="检验"><svg class="i"><use href="#dins"/></svg></button>
      <button class="tb" aria-label="折弯线性"><svg class="i"><use href="#djl"/></svg></button>
      <span class="sep"></span>
      <button class="tb" aria-label="编辑标注"><svg class="i"><use href="#ded"/></svg></button>
      <button class="tb" aria-label="编辑标注文字"><svg class="i"><use href="#dte"/></svg></button>
      <button class="tb" aria-label="标注更新"><svg class="i"><use href="#dup"/></svg></button>
      <span class="sep"></span>
      <label class="combo dimn"><select aria-label="标注样式"><option>DIMN</option></select><svg class="v"><use href="#chev"/></svg></label>
      <button class="tb" aria-label="标注样式管理"><svg class="i"><use href="#dsty"/></svg></button>
    </div>
    <div class="box"><span class="grip"></span>
      <button class="tb" aria-label="并集"><svg class="i"><use href="#uni"/></svg></button>
      <button class="tb" aria-label="差集"><svg class="i"><use href="#sub"/></svg></button>
      <button class="tb" aria-label="交集"><svg class="i"><use href="#int"/></svg></button>
      <span class="sep"></span>
      <button class="tb" aria-label="拉伸面"><svg class="i"><use href="#fext"/></svg></button>
      <button class="tb" aria-label="移动面"><svg class="i"><use href="#fmov"/></svg></button>
      <button class="tb" aria-label="偏移面"><svg class="i"><use href="#foff"/></svg></button>
      <button class="tb" aria-label="删除面"><svg class="i"><use href="#fdel"/></svg></button>
      <button class="tb" aria-label="旋转面"><svg class="i"><use href="#frot"/></svg></button>
      <button class="tb" aria-label="倾斜面"><svg class="i"><use href="#ftap"/></svg></button>
      <button class="tb" aria-label="复制面"><svg class="i"><use href="#fcop"/></svg></button>
      <button class="tb" aria-label="着色面"><svg class="i"><use href="#fcol"/></svg></button>
      <span class="sep"></span>
      <button class="tb" aria-label="圆角边"><svg class="i"><use href="#ecop"/></svg></button>
      <button class="tb" aria-label="倒角边"><svg class="i"><use href="#ecol"/></svg></button>
      <button class="tb" aria-label="复制边"><svg class="i"><use href="#eimp"/></svg></button>
      <button class="tb" aria-label="着色边"><svg class="i"><use href="#ecl"/></svg></button>
      <span class="sep"></span>
      <button class="tb" aria-label="压印"><svg class="i"><use href="#imp"/></svg></button>
      <button class="tb" aria-label="清除"><svg class="i"><use href="#cln"/></svg></button>
      <button class="tb" aria-label="分割"><svg class="i"><use href="#sep3"/></svg></button>
      <button class="tb" aria-label="抽壳"><svg class="i"><use href="#shl"/></svg></button>
      <button class="tb" aria-label="检查"><svg class="i"><use href="#chk"/></svg></button>
    </div>
  </div>
</div>

<main class="work">
  <aside class="dock left"><div class="vbox"><span class="vgrip"></span>
    <button aria-label="直线"><svg class="i"><use href="#line"/></svg></button>
    <button aria-label="构造线"><svg class="i"><use href="#xline"/></svg></button>
    <button aria-label="多段线"><svg class="i"><use href="#pline"/></svg></button>
    <button aria-label="多边形"><svg class="i"><use href="#poly"/></svg></button>
    <button aria-label="矩形"><svg class="i"><use href="#rect"/></svg></button>
    <button aria-label="圆弧"><svg class="i"><use href="#arc"/></svg></button>
    <button aria-label="圆"><svg class="i"><use href="#circ"/></svg></button>
    <button aria-label="修订云线"><svg class="i"><use href="#cloud"/></svg></button>
    <button aria-label="样条曲线"><svg class="i"><use href="#spl"/></svg></button>
    <button aria-label="椭圆"><svg class="i"><use href="#ell"/></svg></button>
    <button aria-label="椭圆弧"><svg class="i"><use href="#ella"/></svg></button>
    <button aria-label="插入块"><svg class="i"><use href="#insb"/></svg></button>
    <button aria-label="创建块"><svg class="i"><use href="#mkb"/></svg></button>
    <button aria-label="点"><svg class="i"><use href="#pts"/></svg></button>
    <button aria-label="图案填充"><svg class="i"><use href="#hat"/></svg></button>
    <button aria-label="渐变色"><svg class="i"><use href="#grad"/></svg></button>
    <button aria-label="面域"><svg class="i"><use href="#reg"/></svg></button>
    <button aria-label="表格"><svg class="i"><use href="#tbl"/></svg></button>
    <button aria-label="多行文字"><svg class="i"><use href="#mtx"/></svg></button>
    <button aria-label="添加选定对象"><svg class="i"><use href="#addsel"/></svg></button>
  </div></aside>

  <div class="canvas">
  <svg viewBox="33 133 1662 1103" role="img" aria-label="加压送风系统图">
    <defs>
      <g id="vent"><path class="ln" d="M736.500-7.500h10v16h-10zM736-3.500h11M736 .5h11M736 4.500h11"/>
        <path class="gl" d="M734-6l-9-9M748-6l9-9M734 7l-9 8M748 7l9 8"/>
        <path class="gf" d="M724-16l6 3-3 3zM758-16l-6 3 3 3zM724 16l6-3-3-3zM758 16l-6-3 3-3z"/></g>
      <g id="lv"><path class="ln" d="M641 .5h81M761 .5h106M636-4.500h28"/><path class="lt" d="M636-4.500l6 5 5-5"/></g>
      <g id="ls"><path class="ln" d="M641 .5h81M761 .5h106M636-4.500h24"/><path class="lt" d="M636-4.500l6 5 5-5"/></g>
      <g id="l0"><path class="ln" d="M641 .5h81M761 .5h106M636-4.500h33"/><path class="lt" d="M636-4.500l6 5 5-5"/></g>
      <g id="riser">
        <path class="ln" d="M722.500 898V278.500h38V898"/>
        <use href="#lv" y="341"/><use href="#lv" y="384"/><use href="#lv" y="427"/><use href="#lv" y="469"/><use href="#lv" y="512"/><use href="#lv" y="555"/><use href="#lv" y="598"/><use href="#lv" y="640"/><use href="#lv" y="683"/><use href="#ls" y="726"/><use href="#ls" y="769"/><use href="#ls" y="812"/><use href="#l0" y="854"/>
        <path class="ln" d="M644 897.500h223M638 892.500h33"/><path class="lt" d="M638 892.500l6 5 6-5"/>
        <use href="#vent" y="365"/><use href="#vent" y="408"/><use href="#vent" y="451"/><use href="#vent" y="493"/><use href="#vent" y="536"/><use href="#vent" y="579"/><use href="#vent" y="622"/><use href="#vent" y="664"/><use href="#vent" y="707"/><use href="#vent" y="750"/><use href="#vent" y="793"/><use href="#vent" y="836"/><use href="#vent" y="878"/>
        <path class="ln" d="M727 302.500h46M730 309.500h8"/><path class="lt" d="M728 303l7 6 6-6"/>
        <path class="gl" d="M748 747l17-12h29M762 886.500h21M779.500 883v17M776 889l7-5M776 900l7-5"/><path class="gf" d="M777 884h5v4h-5zM777 895h5v4h-5z"/>
        <path class="tk" d="M679 947h165"/>
      </g>
      <g id="fan">
        <path class="ln" d="M626 290.500h39M676.500 305.500h14v8h-14z"/><path class="lt" d="M665 291l13 14M677 308h13M677 311h13"/>
        <ellipse class="ln" cx="690.500" cy="303.500" rx="3" ry="5.500"/><ellipse class="ln" cx="690.500" cy="314.500" rx="3" ry="5.500"/>
        <path class="gl" d="M660 308.500h12M712.500 304v10"/><path class="gf" d="M666 306l6 2.500-6 2.500zM701 305h6v7h-6z"/>
        <path class="ln" d="M700.500 305v8M707.500 305v8"/>
      </g>
    </defs>
    <g fill="none" stroke="#8a1f0c">
      <path shape-rendering="crispEdges" d="M1010.500 188v-35.500h256V188M1010 162.500h257M1010 171.500h257M1010 179.500h257M1052.500 153v34M1095.500 153v34M1138.500 153v34M1181.500 153v34M1225.500 153v34"/>
    </g>
    <text class="rt"><tspan x="1018" y="160">专 业</tspan><tspan x="1061" y="160">姓 名</tspan><tspan x="1103" y="160">签 字</tspan><tspan x="1146" y="160">专 业</tspan><tspan x="1189" y="160">姓 名</tspan><tspan x="1232" y="160">签 字</tspan><tspan x="1018" y="169">建 筑</tspan><tspan x="1146" y="169">暖 通</tspan><tspan x="1232" y="169">日 期</tspan><tspan x="1018" y="178">结 构</tspan><tspan x="1146" y="178">电 气</tspan><tspan x="1232" y="178">审 核</tspan><tspan x="1018" y="186">给 水</tspan><tspan x="1146" y="186">弱 电</tspan><tspan x="1232" y="186">校 对</tspan></text>
    <rect class="outer" x="566" y="146" width="717" height="1015"/>
    <rect class="inner" x="582.500" y="188.500" width="684" height="956"/>

    <use href="#riser"/><use href="#riser" x="338"/>
    <use href="#fan"/><use href="#fan" x="308"/>
    <path class="duct" d="M672 309h28M708 309h4M715 309h11M980 309h28M1016 309h10M1034 309h31"/>
    <path class="ln" d="M1026.500 305v8l7-4z"/>

    <text class="nm" x="630" y="288">JYSF-1</text><text class="nm" x="938" y="288">JYSF-2</text>
    <text class="sm" x="699" y="303">ø980</text><text class="sm" x="1007" y="303">ø980</text><text class="sm" x="1035" y="306">500x800</text>
    <text class="el" x="738" y="299">37.150</text><text class="el" x="1076" y="299">37.151</text>
    <text class="el"><tspan x="641" y="334">36.000</tspan><tspan x="641" y="377">33.000</tspan><tspan x="641" y="420">30.000</tspan><tspan x="641" y="462">27.000</tspan><tspan x="641" y="505">24.000</tspan><tspan x="641" y="548">21.000</tspan><tspan x="641" y="591">18.000</tspan><tspan x="641" y="633">15.000</tspan><tspan x="641" y="676">12.000</tspan><tspan x="641" y="719">9.000</tspan><tspan x="641" y="762">6.000</tspan><tspan x="641" y="805">3.000</tspan><tspan x="637" y="847">±0.000</tspan><tspan x="640" y="889">-4.500</tspan></text>
    <text class="el fl"><tspan x="689" y="335">(13f)</tspan><tspan x="689" y="378">(12f)</tspan><tspan x="689" y="421">(11f)</tspan><tspan x="689" y="464">(10f)</tspan><tspan x="689" y="506">(9f)</tspan><tspan x="689" y="549">(8f)</tspan><tspan x="689" y="592">(7f)</tspan><tspan x="689" y="635">(6f)</tspan><tspan x="689" y="677">(5f)</tspan><tspan x="689" y="720">(4f)</tspan><tspan x="689" y="763">(3f)</tspan><tspan x="689" y="806">(2f)</tspan><tspan x="689" y="849">(1f)</tspan><tspan x="691" y="891">(-1f)</tspan></text>
    <text class="el"><tspan x="979" y="334">36.000</tspan><tspan x="979" y="377">33.000</tspan><tspan x="979" y="420">30.000</tspan><tspan x="979" y="462">27.000</tspan><tspan x="979" y="505">24.000</tspan><tspan x="979" y="548">21.000</tspan><tspan x="979" y="591">18.000</tspan><tspan x="979" y="633">15.000</tspan><tspan x="979" y="676">12.000</tspan><tspan x="979" y="719">9.000</tspan><tspan x="979" y="762">6.000</tspan><tspan x="979" y="805">3.000</tspan><tspan x="975" y="847">±0.000</tspan><tspan x="978" y="889">-4.500</tspan></text>
    <text class="el fl"><tspan x="1027" y="335">(13f)</tspan><tspan x="1027" y="378">(12f)</tspan><tspan x="1027" y="421">(11f)</tspan><tspan x="1027" y="464">(10f)</tspan><tspan x="1027" y="506">(9f)</tspan><tspan x="1027" y="549">(8f)</tspan><tspan x="1027" y="592">(7f)</tspan><tspan x="1027" y="635">(6f)</tspan><tspan x="1027" y="677">(5f)</tspan><tspan x="1027" y="720">(4f)</tspan><tspan x="1027" y="763">(3f)</tspan><tspan x="1027" y="806">(2f)</tspan><tspan x="1027" y="849">(1f)</tspan><tspan x="1029" y="891">(-1f)</tspan></text>
    <text class="sm gt"><tspan x="770" y="734">多叶风口</tspan><tspan x="770" y="742">500x800</tspan><tspan x="1108" y="734">多叶风口</tspan><tspan x="1108" y="742">500x800</tspan></text>
    <text class="sm" transform="translate(777 897) rotate(-90)">350</text><text class="sm" transform="translate(1115 897) rotate(-90)">350</text>
    <text class="cap" x="684" y="937">JYSF-1加压送风系统图</text><text class="cap" x="1022" y="937">JYSF-2加压送风系统图</text>
    <text class="note" x="1024" y="1003"><tspan class="cj">注:</tspan>JYSF-3<tspan class="cj">、</tspan>JYSF-4<tspan class="cj">、</tspan>JYSF-5<tspan class="cj">同</tspan>JYSF-2<tspan class="cj">。</tspan></text>

    <path class="cross" d="M1488.500 133v981M1488.500 1125v111M33 1119.500h1450M1494 1119.500h201M1483.500 1114.500h11v11h-11z"/>
    <path class="cross" d="M59.500 1160v49.500H109M55.500 1204.500h9v9h-9z"/>
    <text class="ucs" x="61" y="1156">Y</text><text class="ucs" x="114" y="1209">X</text>

    <circle cx="1612" cy="215" r="54" fill="none" stroke="#444852" stroke-width="13"/>
    <rect x="1586" y="189" width="52" height="52" fill="#afafb1"/><rect x="1596" y="198" width="32" height="33" fill="#a0a4aa"/>
    <text class="cube" x="1599" y="225">上</text>
    <text class="comp"><tspan x="1603" y="166">北</tspan><tspan x="1546" y="223">西</tspan><tspan x="1659" y="223">东</tspan><tspan x="1603" y="279">南</tspan></text>
    <rect x="1588" y="302" width="48" height="18" rx="4" fill="#8e909e"/><text class="wcs" x="1592" y="314">WCS</text><path fill="none" stroke="#c4c6ce" d="M1622 308h8l-4 4z"/>
    <text class="vp" x="36" y="151">[−][俯视][二维线框]</text>
  </svg>
  </div>

  <aside class="dock right"><div class="vbox"><span class="vgrip"></span>
    <button aria-label="删除"><svg class="i"><use href="#era"/></svg></button>
    <button aria-label="复制"><svg class="i"><use href="#mcop"/></svg></button>
    <button aria-label="镜像"><svg class="i"><use href="#mir"/></svg></button>
    <button aria-label="偏移"><svg class="i"><use href="#off"/></svg></button>
    <button aria-label="阵列"><svg class="i"><use href="#arr"/></svg></button>
    <button aria-label="移动"><svg class="i"><use href="#mov"/></svg></button>
    <button aria-label="旋转"><svg class="i"><use href="#rot"/></svg></button>
    <button aria-label="缩放"><svg class="i"><use href="#scl"/></svg></button>
    <button aria-label="拉伸"><svg class="i"><use href="#str"/></svg></button>
    <button aria-label="修剪"><svg class="i"><use href="#trm"/></svg></button>
    <button aria-label="延伸"><svg class="i"><use href="#ext"/></svg></button>
    <button aria-label="打断于点"><svg class="i"><use href="#brp"/></svg></button>
    <button aria-label="打断"><svg class="i"><use href="#brk"/></svg></button>
    <button aria-label="合并"><svg class="i"><use href="#joi"/></svg></button>
    <button aria-label="倒角"><svg class="i"><use href="#cha"/></svg></button>
    <button aria-label="圆角"><svg class="i"><use href="#fil"/></svg></button>
    <button aria-label="光顺曲线"><svg class="i"><use href="#ble"/></svg></button>
    <button aria-label="分解"><svg class="i"><use href="#expl"/></svg></button>
  </div></aside>
</main>

<section class="command">
  <div class="handle"><span class="vgrip"></span>
    <button aria-label="关闭命令行"><svg class="c"><use href="#clsb"/></svg></button>
    <button aria-label="自定义命令行"><svg class="i"><use href="#wrench"/></svg></button></div>
  <div class="lines">
    <p class="history">选择注释对象或<span> [</span>放弃<span>(U)/</span>模式<span>(M)]: *</span>取消<span>*</span></p>
    <div class="prompt"><svg class="i"><use href="#cmd"/></svg><svg class="d"><use href="#down"/></svg><input type="text" aria-label="命令" placeholder="键入命令"></div>
  </div>
</section>

<footer class="status">
  <div class="layouts"><button class="on">模型</button><button>布局1</button><button class="ladd" aria-label="新布局"><svg class="c"><use href="#plus"/></svg></button></div>
  <div class="sgroups">
    <div class="g"><button class="smodel">模型</button></div>
    <div class="g g3"><button aria-label="栅格"><svg class="i"><use href="#sgrid"/></svg></button><button aria-label="捕捉"><svg class="i"><use href="#sdots"/></svg></button><button class="sa" aria-label="捕捉列表"><svg class="d"><use href="#down"/></svg></button></div>
    <div class="g g3"><button aria-label="正交"><svg class="i"><use href="#sorth"/></svg></button><button aria-label="极轴"><svg class="i"><use href="#spol"/></svg></button><button class="sa" aria-label="极轴列表"><svg class="d"><use href="#down"/></svg></button><button aria-label="等轴测"><svg class="i"><use href="#siso"/></svg></button><button class="sa" aria-label="等轴测列表"><svg class="d"><use href="#down"/></svg></button></div>
    <div class="g g1"><button aria-label="对象捕捉追踪"><svg class="i"><use href="#strk"/></svg></button><button class="act" aria-label="对象捕捉"><svg class="i"><use href="#ssnap"/></svg></button><button class="sa" aria-label="对象捕捉列表"><svg class="d"><use href="#down"/></svg></button></div>
    <div class="g g1"><button aria-label="线宽"><svg class="i"><use href="#slw"/></svg></button></div>
    <div class="g g3"><button class="act" aria-label="注释可见性"><svg class="i"><use href="#sanv"/></svg></button><button aria-label="自动缩放"><svg class="i"><use href="#sana"/></svg></button><button aria-label="注释"><svg class="i"><use href="#san"/></svg></button><button class="scale">1:1<svg class="d"><use href="#down"/></svg></button></div>
    <div class="g g3"><button aria-label="工作空间"><svg class="i"><use href="#gear"/></svg></button><button class="sa" aria-label="工作空间列表"><svg class="d"><use href="#down"/></svg></button></div>
    <div class="g g1"><button aria-label="注释监视器"><svg class="i"><use href="#splus"/></svg></button></div>
    <div class="g g3"><button aria-label="隔离对象"><svg class="i"><use href="#siso2"/></svg></button></div>
    <div class="g g3"><button aria-label="图形性能"><svg class="i"><use href="#sgfx"/></svg></button></div>
    <div class="g g1"><button aria-label="全屏显示"><svg class="i"><use href="#sfull"/></svg></button><button aria-label="自定义"><svg class="i"><use href="#smenu"/></svg></button></div>
  </div>
</footer>
</div>
</body>
</html>
```
FILE: styles.css
```css
:root {
  --dark: #222831;
  --panel: #3b4453;
  --edge: #262e3a;
  --light: #dcdde1;
  --blue: #8ecbf8;
}
* { box-sizing: border-box; }
body {
  margin: 0;
  background: var(--dark);
  color: #c0c3c9;
  font: 12px/16px "Noto Sans", "Noto Sans CJK SC", sans-serif;
}
button, input, select { font: inherit; color: inherit; }
button {
  display: flex;
  align-items: center;
  justify-content: center;
  padding: 0;
  border: 0;
  background: none;
  white-space: nowrap;
}
.sprite { position: absolute; width: 0; height: 0; }
.w { fill: #dcdde1; }
.b { fill: #8ecbf8; }
.y { fill: #f6d67c; }
.o { fill: #f5a000; }
.sw { stroke: #dcdde1; }
.sb { stroke: #8ecbf8; }
.sg { stroke: #5fc07f; }
.sy { stroke: #f6d67c; }
.sw:not([fill]), .sb:not([fill]), .sg:not([fill]) { fill: none; }
.i { display: block; width: 16px; height: 16px; flex: none; }
.c { display: block; width: 10px; height: 10px; flex: none; }
.d { display: block; width: 7px; height: 4px; flex: none; }

.window {
  display: flex;
  flex-direction: column;
  min-height: 100vh;
  padding: 0 3px;
  border: 1px solid #178ebf;
}

/* title bar */
.title { display: flex; align-items: center; height: 28px; }
.title h1 {
  flex: 1;
  margin: 0;
  font-size: 12px;
  font-weight: 400;
  text-align: center;
  color: #e6e7ea;
  white-space: nowrap;
}
.title h1 span { margin-left: 14px; }
.t24 { width: 24px; height: 24px; }
.dd { width: 11px; height: 24px; }
.dd.wide { width: 18px; }
.dim { opacity: .35; }
.dim2 { opacity: .7; }
.quick { display: flex; align-items: center; margin-left: 10px; }
.share { gap: 5px; margin-left: 4px; color: var(--blue); }
.service { display: flex; align-items: center; }
.play {
  width: 5px;
  height: 8px;
  margin-right: 6px;
  background: var(--light);
  clip-path: polygon(0 0, 100% 50%, 0 100%);
}
.search {
  width: 178px;
  height: 20px;
  padding: 0 2px;
  border: 0;
  background: #454e5f;
  font-size: 11px;
}
.search::placeholder { color: #b2b6be; font-style: italic; opacity: 1; }
.account { gap: 5px; height: 24px; margin: 0 5px 0 3px; color: #e6e7ea; }
.bar { width: 1px; height: 18px; margin: 0 5px; background: #555d69; }
.wctl { display: flex; margin-left: 60px; }
.wctl button { width: 25px; height: 24px; }

/* menu bar */
.menu {
  display: flex;
  align-items: center;
  gap: 25px;
  height: 20px;
  padding-left: 14px;
  border-bottom: 1px solid #434a56;
}
.wctl.doc { margin-left: auto; }
.wctl.doc button { width: 18px; height: 18px; }

/* drawing tabs */
.files { display: flex; align-items: flex-end; height: 25px; padding-left: 16px; }
.file {
  height: 22px;
  padding-top: 2px;
  background: #2f3745;
  clip-path: polygon(9px 0, calc(100% - 9px) 0, 100% 100%, 0 100%);
}
.file.start { width: 128px; justify-content: flex-start; padding-left: 16px; }
.file.active {
  display: flex;
  align-items: center;
  gap: 7px;
  padding: 2px 14px 0 11px;
  background: var(--panel);
  color: #fff;
  font-weight: 700;
}
.file.active button { color: #fff; font-weight: 700; }
.file.active .x { opacity: .7; }
.file.add { width: 26px; height: 16px; margin: 0 0 2px 3px; padding: 0; clip-path: none; border-radius: 4px; background: #2c3340; }
.file.add .c { opacity: .8; }

/* toolbars */
.bars { display: flex; flex-direction: column; gap: 5px; padding: 5px 0; margin-right: -1px; background: var(--panel); }
.row { display: flex; height: 22px; }
.box { display: flex; align-items: center; height: 22px; border: 1px solid var(--edge); }
.gap1 { margin-left: 1px; }
.grip, .vgrip {
  background: radial-gradient(#aab0ba 40%, transparent 50%) 0 0 / 3px 3px;
}
.grip { width: 6px; height: 15px; margin-right: 2px; }
.rule { width: 1px; height: 18px; margin: 0 1px 0 2px; background: #e8e8e8; }
.tb { width: 23px; height: 20px; }
.ta { width: 13px; height: 20px; }
.sep { width: 1px; height: 18px; margin: 0 2px 0 3px; background: #e8e8e8; box-shadow: -1px 0 #12161c; }
.combo {
  display: flex;
  align-items: center;
  gap: 4px;
  height: 22px;
  padding: 0 4px;
  background: #fdfdfd;
  color: #1c1c1c;
}
.combo select {
  flex: 1;
  min-width: 0;
  height: 20px;
  padding: 1px 0 0;
  border: 0;
  background: none;
  appearance: none;
  opacity: 1;
}
.v { width: 8px; height: 6px; flex: none; color: #666; }
.swatch { width: 13px; height: 13px; flex: none; border: 1px solid #111; background: #fff; }
.stroke { height: 1px; flex: none; background: #111; }
.layer { width: 299px; gap: 2px; padding-left: 3px; }
.near { margin-left: 1px; }
.layer .swatch { margin: 0 3px 0 1px; }
.color { width: 150px; padding-left: 2px; }
.ltype { width: 160px; }
.ltype .stroke { width: 60px; }
.lweight { width: 125px; }
.lweight .stroke { width: 35px; }
.pstyle { width: 120px; padding-left: 10px; color: #888; }
.pstyle .v { color: #bbb; }
.dimn { width: 120px; padding-left: 19px; }

/* work area */
.work { display: flex; flex: 1; min-height: 600px; background: var(--panel); }
.dock { flex: none; background: var(--panel); }
.dock.left { width: 29px; }
.dock.right { width: 32px; padding-left: 4px; }
.vbox { width: 24px; border: 1px solid var(--edge); }
.vbox button { width: 22px; height: 22px; }
.vgrip { display: block; width: 15px; height: 6px; }
.vbox .vgrip { margin: 1px auto; }
.canvas { display: flex; flex: 1; min-width: 0; background: #212830; }
.canvas svg { flex: 1; width: 100%; min-width: 0; }
.ln { fill: none; stroke: #fff; stroke-width: 1.4; }
.lt { fill: none; stroke: #f0f0f0; }
.cross { fill: none; stroke: #fff; shape-rendering: crispEdges; }
.gl { fill: none; stroke: #10e010; stroke-width: 1.2; }
.gf { fill: #10e010; }
.duct { stroke: #fff; stroke-width: 2; }
.tk { stroke: #fff; stroke-width: 4; }
.outer { fill: none; stroke: #0fc812; stroke-width: 2; }
.inner { fill: none; stroke: #fff; stroke-width: 3; }
.canvas text { fill: #fff; font-family: "Liberation Sans", "Noto Sans CJK SC", sans-serif; }
.canvas .el { font-size: 8px; font-weight: 700; }
.canvas .fl { text-anchor: end; }
.canvas .nm { font-size: 9px; stroke: #fff; stroke-width: .3px; }
.canvas .sm { font-size: 6px; font-weight: 700; }
.canvas .gt { fill: #10e010; }
.canvas .rt { font-size: 6px; font-weight: 700; fill: #a3240d; }
.canvas .cap { font-family: "Liberation Serif", "Noto Sans CJK SC", serif; font-size: 16px; stroke: #fff; stroke-width: .5px; }
.canvas .note { font-size: 10px; stroke: #fff; stroke-width: .2px; }
.canvas .cj { font-size: 7px; }
.canvas .ucs { font-family: Lato, sans-serif; font-weight: 300; font-size: 20px; }
.canvas .cube { font-size: 26px; fill: #4b4c50; }
.canvas .comp { font-size: 18px; fill: #b0b2b6; }
.canvas .wcs { font-size: 11px; fill: #474957; }
.canvas .vp { font-family: "Noto Sans CJK SC", sans-serif; font-size: 13px; fill: #06080a; }

/* command line */
.command {
  display: flex;
  padding: 1px 1px 1px 0;
  border-top: 2px solid var(--panel);
}
.handle {
  display: flex;
  flex-direction: column;
  align-items: center;
  width: 25px;
  height: 54px;
  padding: 4px 2px 0 0;
  background: #2c3340;
}
.handle button { width: 20px; height: 20px; }
.handle button:last-child { height: 24px; margin-top: 2px; }
.handle .vgrip { flex: none; }
.handle button { flex: 0 1 auto; min-height: 0; }
.lines { flex: 1; display: flex; flex-direction: column; gap: 1px; min-width: 0; }
.history {
  margin: 0;
  padding-left: 3px;
  height: 29px;
  background: #c8c8c8;
  color: #0c0c0c;
  font: 18px/29px "Noto Sans CJK SC", sans-serif;
  white-space: pre;
}
.history span { font: 16px/28px "DejaVu Sans Mono", monospace; }
.prompt { display: flex; align-items: center; height: 24px; padding-left: 4px; background: #fff; }
.prompt .d { margin: 0 8px 0 2px; filter: brightness(.5); }
.prompt input {
  flex: 1;
  height: 24px;
  padding: 0 0 2px;
  border: 0;
  background: none;
  color: #111;
  font: 18px/22px "Noto Sans CJK SC", sans-serif;
}
.prompt input::placeholder { color: #8a8a8a; font-style: italic; opacity: 1; }

/* status bar */
.status { display: flex; justify-content: space-between; height: 32px; border-top: 1px solid #3a414d; }
.layouts { display: flex; padding-left: 9px; }
.layouts button {
  height: 17px;
  padding: 0 12px;
  background: #2c3340;
  clip-path: polygon(0 0, 100% 0, calc(100% - 7px) 100%, 7px 100%);
}
.layouts .on { padding: 0 12px 0 14px; background: var(--panel); color: #fff; font-weight: 700; }
.layouts .ladd { padding: 0 9px; }
.layouts .c { opacity: .7; }
.sgroups { display: flex; margin: 1px 2px 0 0; }
.g { display: flex; height: 24px; background: var(--panel); }
.g3 { margin-left: 3px; }
.g1 { margin-left: 1px; }
.g button { width: 24px; height: 24px; }
.g .sa { width: 16px; }
.g .smodel { width: 30px; color: #f2f3f5; }
.g .scale { width: 34px; gap: 3px; color: #f2f3f5; }
.g .act { background: #5c8ec6; }
```
